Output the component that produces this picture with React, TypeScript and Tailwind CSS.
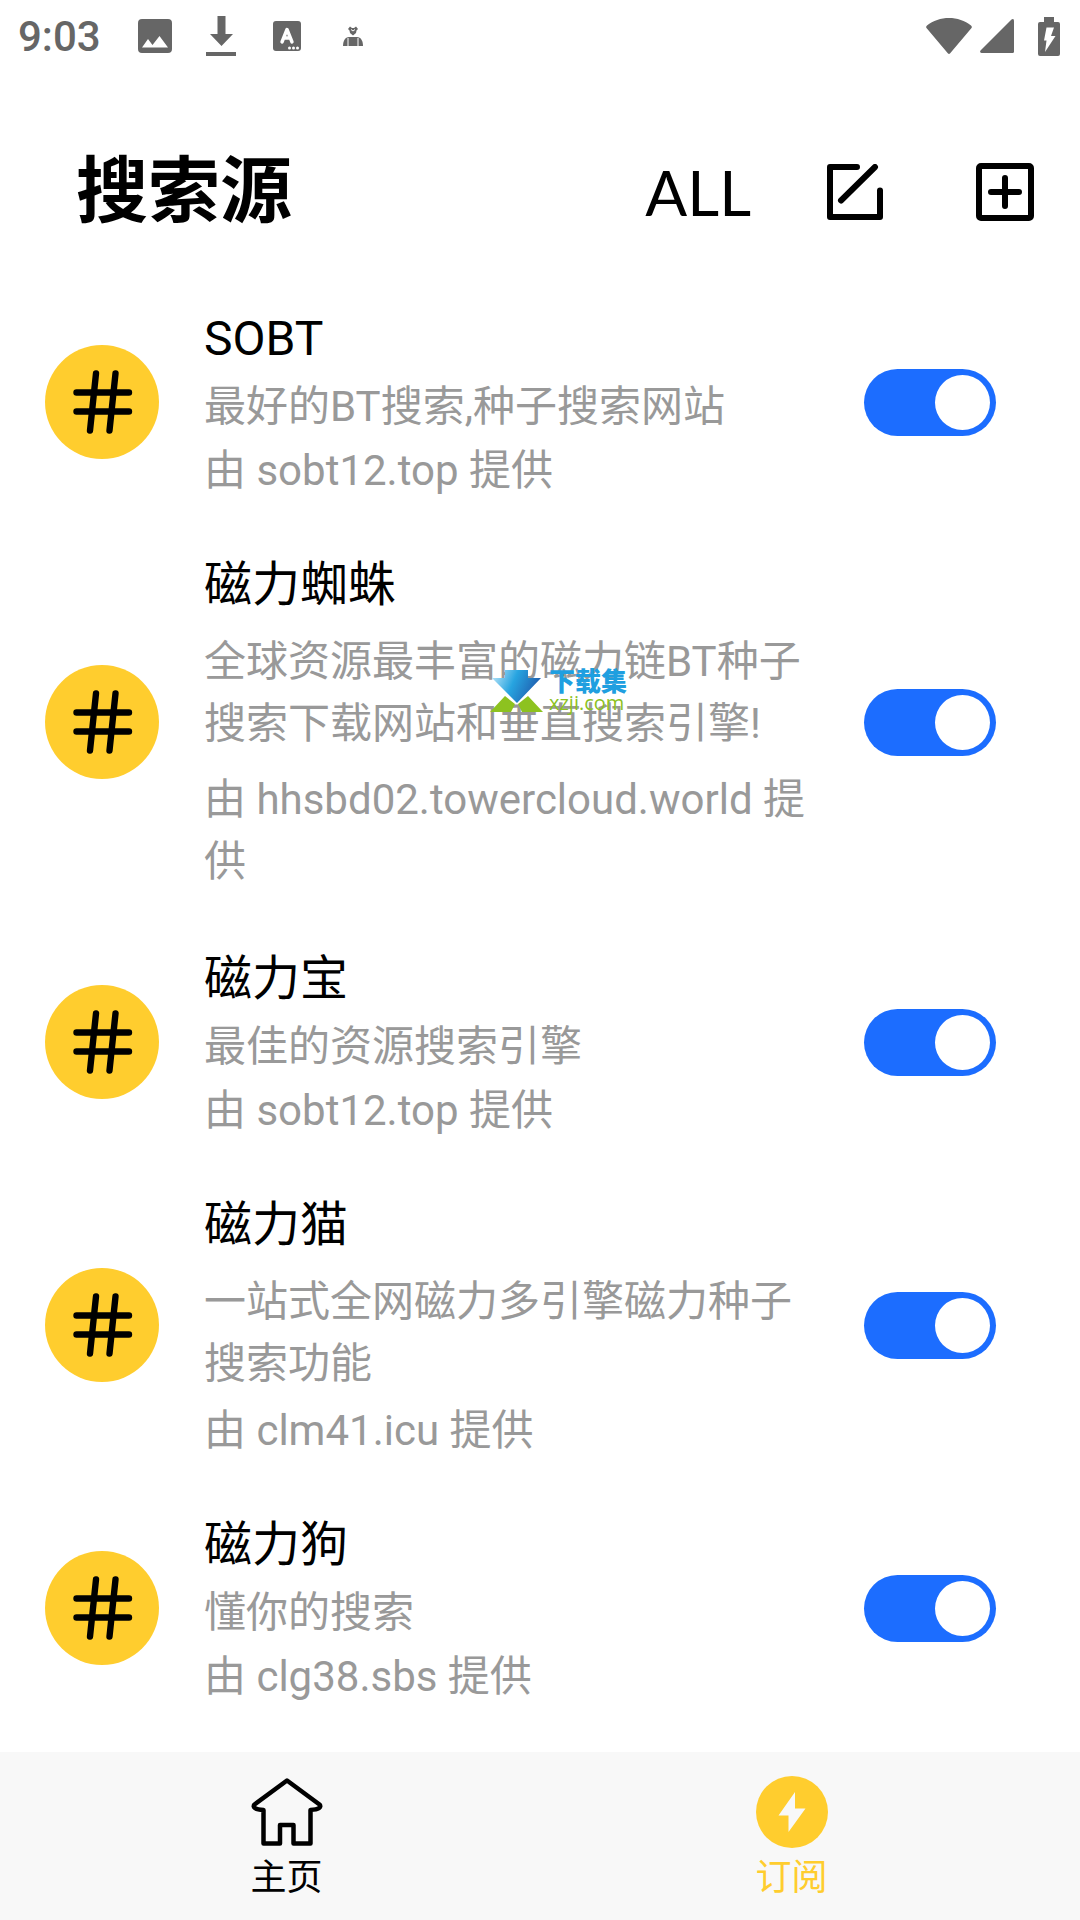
type Source = { name: string; desc: string; host: string; descLong?: boolean; hostLong?: boolean };

const sources: Source[] = [
  { name: "SOBT", desc: "最好的BT搜索,种子搜索网站", host: "sobt12.top" },
  {
    name: "磁力蜘蛛",
    desc: "全球资源最丰富的磁力链BT种子搜索下载网站和垂直搜索引擎!",
    host: "hhsbd02.towercloud.world",
    descLong: true,
    hostLong: true,
  },
  { name: "磁力宝", desc: "最佳的资源搜索引擎", host: "sobt12.top" },
  { name: "磁力猫", desc: "一站式全网磁力多引擎磁力种子搜索功能", host: "clm41.icu", descLong: true },
  { name: "磁力狗", desc: "懂你的搜索", host: "clg38.sbs" },
];

const SHORT = "leading-[44px]";
const LONG = "leading-[62px] -mb-1.5";

function StatusBar() {
  return (
    <div className="flex h-[72px] items-center justify-between pl-[18px] pr-5 text-[#666]">
      <div className="flex items-center">
        <span className="pt-0.5 text-[42px] font-medium leading-[72px]">9:03</span>
        <svg className="ml-[37px] h-[34px] w-[34px]" viewBox="0 0 34 34" fill="currentColor">
          <path fillRule="evenodd" d="M4 0h26a4 4 0 0 1 4 4v26a4 4 0 0 1-4 4H4a4 4 0 0 1-4-4V4a4 4 0 0 1 4-4ZM4 28.500h26L21.500 17l-7 9-4.500-6Z" />
        </svg>
        <svg className="ml-[34px] h-10 w-[30px]" viewBox="0 0 30 40" fill="currentColor">
          <path d="M11.500 0h8v18H27L15.500 30 4 18h7.500ZM0 36h30v4H0Z" />
        </svg>
        <svg className="ml-[37px] h-[30px] w-7" viewBox="0 0 28 30">
          <rect width="28" height="30" rx="3" fill="currentColor" />
          <path d="M9 21 14 8.500 19 21M10.500 17h7" fill="none" stroke="#fff" strokeWidth="3.400" strokeLinecap="round" strokeLinejoin="round" />
          <g fill="#fff">
            <circle cx="16.500" cy="27" r="1.500" />
            <circle cx="20.500" cy="27" r="1.500" />
            <circle cx="24.500" cy="27" r="1.500" />
          </g>
        </svg>
        <svg className="ml-[42px] h-5 w-5" viewBox="0 0 20 20" fill="currentColor">
          <path d="M5 3 7 .5 9 2 11 2 13 .5 15 3 13.500 4.500 13 7 10 9.500 7 7 6.500 4.500Z" />
          <path d="M0 20c0-5 2-9 6-9h8c4 0 6 4 6 9Z" />
          <path d="M5 12V20M15 12V20" fill="none" stroke="#fff" strokeWidth="1" />
          <path d="M8 3.500 10 5 12 3.500" fill="none" stroke="#fff" strokeWidth="1" />
        </svg>
      </div>
      <div className="flex items-center">
        <svg className="h-9 w-[46px]" viewBox="0 0 46 36" fill="currentColor">
          <path d="M1 7.500C7 2.500 15 0 23 0s16 2.500 22 7.500q1.500 1.200.3 2.800L24.200 35.300q-1.200 1.400-2.400 0L.7 10.300Q-.5 8.700 1 7.500Z" />
        </svg>
        <svg className="ml-2 h-[34px] w-[34px]" viewBox="0 0 34 34" fill="currentColor">
          <path d="M34 1.500V32.500q0 1.500-1.500 1.500H1.500q-2.200-.6-1-2.500L31.500.5Q33.600-.6 34 1.500Z" />
        </svg>
        <svg className="ml-6 h-[39px] w-[22px]" viewBox="0 0 22 39">
          <path fill="currentColor" d="M6 0h10v5h4q2 0 2 2v30q0 2-2 2H2q-2 0-2-2V7q0-2 2-2h4Z" />
          <path fill="#fff" d="M8.500 10.500h7.500l-3 8.500h4.500L7 35l1.500-11.500H6Z" />
        </svg>
      </div>
    </div>
  );
}

function Header() {
  return (
    <header className="flex items-center pb-[39px] pl-[76px] pr-[46px] pt-[72px]">
      <h1 className="flex-1 text-[72px] font-bold leading-[96px]">搜索源</h1>
      <button type="button" className="font-['Lato',sans-serif] text-[62px] leading-[96px]">
        ALL
      </button>
      <button type="button" aria-label="编辑" className="ml-[76px]">
        <svg className="h-14 w-14" viewBox="0 0 56 56" fill="none" stroke="#000" strokeWidth="6" strokeLinecap="round" strokeLinejoin="round">
          <path d="M30 3H3V53H53V26.500M48 3 14 36.500" />
        </svg>
      </button>
      <button type="button" aria-label="添加" className="ml-[93px]">
        <svg className="h-[58px] w-[58px]" viewBox="0 0 58 58" fill="none" stroke="#000" strokeWidth="6" strokeLinecap="round">
          <rect x="3" y="3" width="52" height="52" rx="2" />
          <path d="M15 29H43M29 15V43" />
        </svg>
      </button>
    </header>
  );
}

function HashIcon() {
  return (
    <svg className="h-[114px] w-[114px] shrink-0" viewBox="0 0 114 114">
      <circle cx="57" cy="57" r="57" fill="#ffcd2e" />
      <path d="M31.500 47.500H84M31.500 66.500H84M51 28.500 45 85.500M70.500 28.500 64.500 85.500" fill="none" stroke="#000" strokeWidth="6.400" strokeLinecap="round" />
    </svg>
  );
}

function Watermark() {
  return (
    <div className="pointer-events-none absolute left-[490px] top-[145px] flex items-start gap-1.5">
      <svg className="h-[43px] w-[53px]" viewBox="0 0 53 43">
        <defs>
          <linearGradient id="arrow" x1="0" x2="1" y1="0" y2="0.3">
            <stop offset="0.1" stopColor="#a5dcf5" />
            <stop offset="0.5" stopColor="#27a4e0" />
            <stop offset="1" stopColor="#2060b0" />
          </linearGradient>
        </defs>
        <path fill="url(#arrow)" d="M15 0H38V8H51L27 33 2 8H15Z" />
        <path fill="#8dc21f" d="M15 26 25 34 21 42H0ZM38 26 28 34 32 42H53Z" />
      </svg>
      <div className="flex flex-col">
        <span className="text-[26px] font-black leading-6 text-[#1f9fe0]">下载集</span>
        <span className="font-['Open_Sans',sans-serif] text-xl font-medium leading-[18px] text-[#8dc21f]">xzji.com</span>
      </div>
    </div>
  );
}

function SourceRow({ source, id }: { source: Source; id: string }) {
  return (
    <li className="relative flex items-center py-8 pl-[45px] pr-[84px]">
      <HashIcon />
      <div className="ml-[45px] mr-[45px] flex min-w-0 flex-1 flex-col gap-5 pt-0.5 text-[42px] text-[#999]">
        <label htmlFor={id} className="text-5xl leading-[52px] text-black">
          {source.name}
        </label>
        <p className={source.descLong ? LONG : SHORT}>{source.desc}</p>
        <p className={source.hostLong ? LONG : SHORT}>由 {source.host} 提供</p>
      </div>
      <input
        id={id}
        type="checkbox"
        role="switch"
        defaultChecked
        className="flex h-[67px] w-[132px] shrink-0 appearance-none items-center rounded-full bg-gray-300 px-1.5 before:h-[55px] before:w-[55px] before:rounded-full before:bg-white checked:justify-end checked:bg-[#1c6dff]"
      />
      {source.name === "磁力蜘蛛" && <Watermark />}
    </li>
  );
}

function BottomNav() {
  return (
    <nav className="mt-auto flex h-[168px] bg-[#f8f8f8] pl-[34px] pr-9 text-4xl leading-[44px]">
      <a href="#home" className="flex flex-1 flex-col items-center pt-6">
        <svg className="h-[72px] w-[72px]" viewBox="0 0 72 72" fill="none" stroke="#000" strokeWidth="4.500" strokeLinejoin="round">
          <path d="M36 4.500 3.500 28.500Q0 33 12.500 34V67.500H29V49H42.500V67.500H59.500V34Q72 33 68.500 28.500Z" />
        </svg>
        <span className="mt-2">主页</span>
      </a>
      <a href="#subscribe" aria-current="page" className="flex flex-1 flex-col items-center pt-6 text-[#ffcd2e]">
        <svg className="h-[72px] w-[72px]" viewBox="0 0 72 72">
          <circle cx="36" cy="36" r="36" fill="#ffcd2e" />
          <path fill="#f8f8f8" d="M39 16V32.500H49.500L32.500 56V39.500H22.500Z" />
        </svg>
        <span className="mt-2">订阅</span>
      </a>
    </nav>
  );
}

export default function App() {
  return (
    <div className="flex min-h-screen flex-col bg-white font-['Roboto','Noto_Sans_CJK_SC',sans-serif] text-black">
      <StatusBar />
      <Header />
      <ul className="flex flex-col">
        {sources.map((s, i) => (
          <SourceRow key={s.name} source={s} id={`source-${i}`} />
        ))}
      </ul>
      <BottomNav />
    </div>
  );
}
